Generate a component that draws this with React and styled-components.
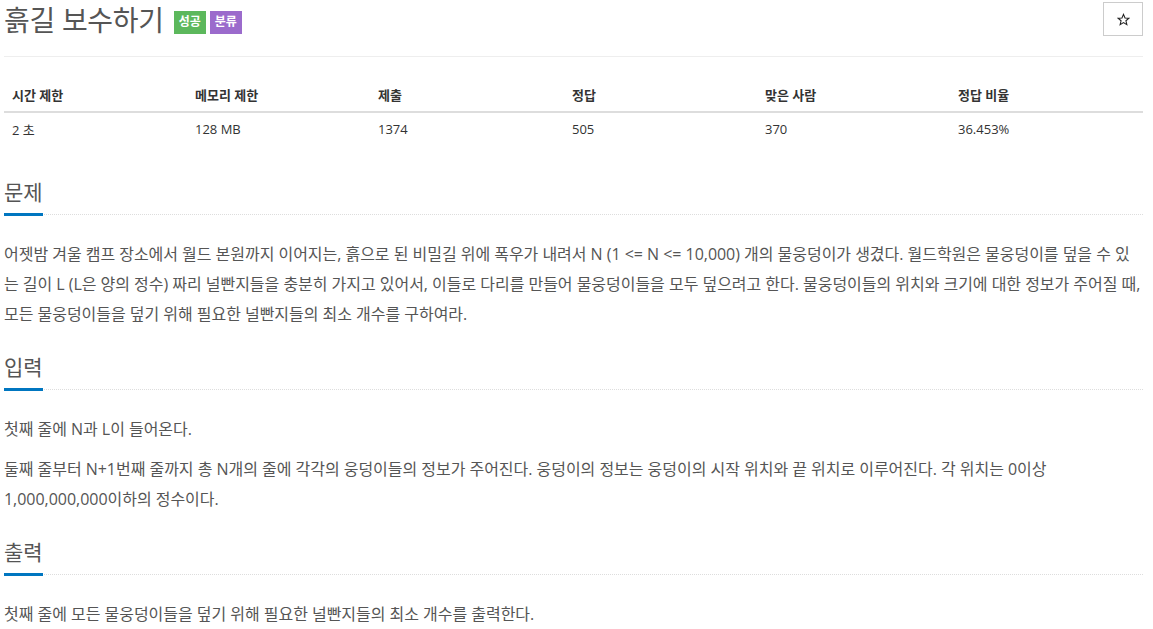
import React from "react";
import styled, { createGlobalStyle } from "styled-components";

const Global = createGlobalStyle`
  html, body { margin: 0; padding: 0; background: #fff; }
  body {
    font-family: "Open Sans", "Noto Sans CJK KR", sans-serif;
    color: #333;
  }
`;

const Page = styled.div`
  padding: 0 10px 0 4px;
`;

const Header = styled.div`
  display: flex;
  align-items: flex-start;
  justify-content: space-between;
  padding-top: 2px;
  padding-bottom: 18px;
  border-bottom: 1px solid #eee;
`;

const Title = styled.h1`
  margin: 0;
  display: flex;
  align-items: center;
  gap: 4px;
  font-family: "Open Sans", "Noto Sans CJK KR", sans-serif;
  font-weight: 400;
  font-size: 28px;
  line-height: 36px;
  color: #555;
  letter-spacing: -0.3px;
`;

const TitleText = styled.span`
  margin-right: 6px;
`;

const Badge = styled.span`
  display: inline-flex;
  align-items: center;
  justify-content: center;
  height: 23px;
  padding: 0 5px;
  margin-top: 4px;
  font-size: 12px;
  font-weight: 700;
  letter-spacing: 0;
  color: #fff;
  background: ${(p) => p.$color};
`;

const StarButton = styled.button`
  width: 40px;
  height: 34px;
  border: 1px solid #ccc;
  background: #fff;
  padding: 0;
  display: flex;
  align-items: center;
  justify-content: center;
  color: #333;
`;

const InfoTable = styled.div`
  margin-top: 20px;
  display: grid;
  grid-template-columns: 183px 183px 194px 193px 193px 1fr;
  font-size: 13px;
`;

const Th = styled.div`
  padding: 8px;
  height: 36px;
  box-sizing: border-box;
  display: flex;
  align-items: center;
  font-weight: 700;
  color: #333;
  border-bottom: 2px solid #ddd;
`;

const Td = styled.div`
  padding: 8px;
  height: 32px;
  box-sizing: border-box;
  display: flex;
  align-items: center;
  color: #333;
`;

const Section = styled.section`
  margin-top: ${(p) => p.$top}px;
`;

const Headline = styled.div`
  border-bottom: 1px dotted #ddd;
  padding-bottom: 7px;
`;

const HeadlineText = styled.h2`
  margin: 0;
  display: inline-block;
  font-size: 21px;
  font-weight: 400;
  line-height: 30px;
  color: #555;
  position: relative;
  &::after {
    content: "";
    position: absolute;
    left: 0;
    right: 0;
    bottom: -9px;
    height: 3px;
    background: #0076c0;
  }
`;

const Body = styled.div`
  margin-top: 24px;
  font-size: 16px;
  line-height: 30px;
  letter-spacing: -0.03px;
  color: #555;
`;

const P = styled.p`
  margin: 0 0 ${(p) => p.$gap || 0}px;
`;

const Star = () => (
  <svg width="13" height="13" viewBox="0 0 24 24" fill="none" stroke="#222" strokeWidth="2" strokeLinejoin="miter">
    <path d="M12 2.5l2.8 6.6 7.2.6-5.5 4.7 1.7 7-6.2-3.8-6.2 3.8 1.7-7L2 9.7l7.2-.6z" />
  </svg>
);

const headers = ["시간 제한", "메모리 제한", "제출", "정답", "맞은 사람", "정답 비율"];
const values = ["2 초", "128 MB", "1374", "505", "370", "36.453%"];

export default function App() {
  return (
    <Page>
      <Global />
      <Header>
        <Title>
          <TitleText>흙길 보수하기</TitleText>
          <Badge $color="#5cb85c">성공</Badge>
          <Badge $color="#9b6bcc">분류</Badge>
        </Title>
        <StarButton aria-label="star">
          <Star />
        </StarButton>
      </Header>

      <InfoTable>
        {headers.map((h) => (
          <Th key={h}>{h}</Th>
        ))}
        {values.map((v, i) => (
          <Td key={i}>{v}</Td>
        ))}
      </InfoTable>

      <Section $top={32}>
        <Headline>
          <HeadlineText>문제</HeadlineText>
        </Headline>
        <Body>
          <P>
            어젯밤 겨울 캠프 장소에서 월드 본원까지 이어지는, 흙으로 된 비밀길 위에 폭우가 내려서 N (1 &lt;= N &lt;= 10,000) 개의 물웅덩이가 생겼다. 월드학원은 물웅덩이를 덮을 수 있는 길이 L (L은 양의 정수) 짜리 널빤지들을 충분히 가지고 있어서, 이들로 다리를 만들어 물웅덩이들을 모두 덮으려고 한다. 물웅덩이들의 위치와 크기에 대한 정보가 주어질 때, 모든 물웅덩이들을 덮기 위해 필요한 널빤지들의 최소 개수를 구하여라.
          </P>
        </Body>
      </Section>

      <Section $top={23}>
        <Headline>
          <HeadlineText>입력</HeadlineText>
        </Headline>
        <Body>
          <P $gap={10}>첫째 줄에 N과 L이 들어온다.</P>
          <P>
            둘째 줄부터 N+1번째 줄까지 총 N개의 줄에 각각의 웅덩이들의 정보가 주어진다. 웅덩이의 정보는 웅덩이의 시작 위치와 끝 위치로 이루어진다. 각 위치는 0이상 1,000,000,000이하의 정수이다.
          </P>
        </Body>
      </Section>

      <Section $top={23}>
        <Headline>
          <HeadlineText>출력</HeadlineText>
        </Headline>
        <Body>
          <P>첫째 줄에 모든 물웅덩이들을 덮기 위해 필요한 널빤지들의 최소 개수를 출력한다.</P>
        </Body>
      </Section>
    </Page>
  );
}
